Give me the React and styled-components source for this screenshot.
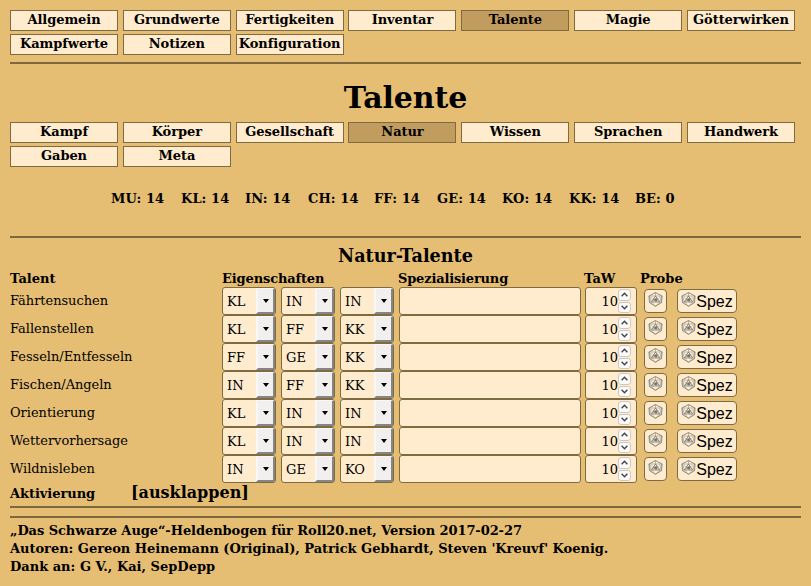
import React from "react";
import styled, { createGlobalStyle } from "styled-components";

const ink = "#000";
const line = "#806a40";
const cream = "#ffebcd";

const GlobalStyle = createGlobalStyle`
  *, *::before, *::after { box-sizing: border-box; }
  body {
    margin: 0;
    background: #e5be74;
    color: ${ink};
    font: 13px/18px "DejaVu Serif", serif;
    overflow: hidden;
  }
`;

const Sheet = styled.main`
  width: 811px;
  height: 586px;
  padding: 10px 10px 0;
`;

const Tabs = styled.nav`
  display: flex;
  flex-wrap: wrap;
  gap: 3px 4.83px;
`;

const Tab = styled.button`
  width: 108px;
  height: 21px;
  padding: 0 0 2px;
  border: 1px solid ${line};
  background: ${(p) => (p.$active ? "#c09c5e" : cream)};
  color: ${ink};
  font: bold 13px/17px "DejaVu Serif", serif;
  letter-spacing: -0.07px;
  white-space: nowrap;
  display: flex;
  justify-content: center;
  align-items: center;
`;

const Rule = styled.hr`
  height: 2px;
  margin: ${(p) => p.$top}px 0 0;
  border: 0;
  background: #80683e;
`;

const Title = styled.h1`
  margin: 15px 0 5px;
  font-size: 30px;
  line-height: 38px;
  letter-spacing: -0.1px;
  text-align: center;
`;

const Stats = styled.div`
  display: flex;
  margin: 23px 0 0 101px;
  font-weight: bold;
`;

const Stat = styled.span`
  width: ${(p) => p.$w}px;
  letter-spacing: 0.08px;
  white-space: nowrap;
`;

const Subtitle = styled.h2`
  margin: 6px 0 0;
  font-size: 17.6px;
  line-height: 24px;
  text-align: center;
`;

const Row = styled.div`
  display: grid;
  grid-template-columns: 212px 59px 59px 59px 186px 59px 33px 60px;
  height: 28px;
`;

const HeadRow = styled.div`
  display: grid;
  grid-template-columns: 212px 176px 186px 56px 60px;
  height: 19px;
  padding-top: 2px;
  line-height: 18px;
  font-weight: bold;
`;

const HeadCell = styled.span`
  letter-spacing: ${(p) => p.$tracking || 0}px;
`;

const Name = styled.span`
  line-height: 27px;
  letter-spacing: -0.04px;
`;

const Select = styled.div`
  display: flex;
  justify-content: space-between;
  width: 54px;
  height: 28px;
  padding-left: 4px;
  border: 1px solid ${line};
  border-radius: 3px;
  background: ${cream};
  line-height: 27px;
`;

const Arrow = styled.span`
  width: 19px;
  height: 26px;
  border-style: solid;
  border-width: 1px 2px 2px 2px;
  border-color: #f7f7f7 #858585 #858585 #f7f7f7;
  background: #f1f0ef;
  display: flex;
  align-items: center;
  justify-content: center;

  &::after {
    content: "";
    border: 3.5px solid transparent;
    border-top: 4px solid #000;
    border-bottom: 0;
  }
`;

const Field = styled.div`
  width: 182px;
  height: 28px;
  border: 1px solid ${line};
  border-radius: 3px;
  background: ${cream};
`;

const NumberField = styled.div`
  display: flex;
  justify-content: flex-end;
  width: 52px;
  height: 28px;
  padding: 0 5px 0 0;
  border: 1px solid ${line};
  border-radius: 3px;
  background: ${cream};
  line-height: 27px;
`;

const Spinner = styled.span`
  display: flex;
  flex-direction: column;
  gap: 1px;
  width: 13px;
  padding-top: 1px;
`;

const Step = styled.span`
  display: flex;
  align-items: center;
  justify-content: center;
  height: 11.5px;
  border: 1px solid #d0c8bc;
  border-radius: 3px;
  background: #fbfafa;
`;

const Roll = styled.button`
  display: flex;
  align-items: center;
  justify-content: center;
  width: ${(p) => (p.$wide ? 60 : 23)}px;
  height: 24px;
  margin-top: 2px;
  padding: 0;
  border: 1px solid ${line};
  border-radius: 4px;
  background: ${cream};
  color: ${ink};
  font: 16px/22px "Liberation Sans", sans-serif;
`;

const RollLabel = styled.span`
  padding-top: 2px;
`;

const DieIcon = styled.svg`
  flex: none;
  width: 15px;
  height: 16px;
  margin-top: -4px;
`;

const Activation = styled.div`
  display: flex;
  align-items: baseline;
  height: 23px;
  font-weight: bold;
  line-height: 20px;
`;

const ActivationLabel = styled.span`
  width: 121px;
  letter-spacing: -0.05px;
`;

const Expand = styled.span`
  font-size: 16px;
`;

const Credits = styled.footer`
  margin-top: 4px;
  font-weight: bold;
`;

const Credit = styled.div`
  height: 18px;
  letter-spacing: ${(p) => p.$tracking || 0}px;
  white-space: nowrap;
`;

const mainTabs = ["Allgemein", "Grundwerte", "Fertigkeiten", "Inventar", "Talente", "Magie", "Götterwirken", "Kampfwerte", "Notizen", "Konfiguration"];
const talentTabs = ["Kampf", "Körper", "Gesellschaft", "Natur", "Wissen", "Sprachen", "Handwerk", "Gaben", "Meta"];
const stats = [["MU: 14", 70], ["KL: 14", 64], ["IN: 14", 63], ["CH: 14", 66], ["FF: 14", 63], ["GE: 14", 65], ["KO: 14", 67], ["KK: 14", 66], ["BE: 0", 60]];
const talents = [
  ["Fährtensuchen", "KL", "IN", "IN"],
  ["Fallenstellen", "KL", "FF", "KK"],
  ["Fesseln/Entfesseln", "FF", "GE", "KK"],
  ["Fischen/Angeln", "IN", "FF", "KK"],
  ["Orientierung", "KL", "IN", "IN"],
  ["Wettervorhersage", "KL", "IN", "IN"],
  ["Wildnisleben", "IN", "GE", "KO"],
];

function Die() {
  return (
    <DieIcon viewBox="0 0 15 16" fill="none" strokeLinejoin="round">
      <path d="M7.5 1.6 14 5 13.5 11.6 7.5 15.3 1.5 11.6 1 5Z" fill="#fdf1dc" stroke="#77726a" strokeWidth=".8" />
      <path d="M7.5 5 11.6 11H3.4Z" stroke="#5f594f" strokeWidth=".7" />
      <path d="M7.5 1v4M1 5h13l-2.4 6 1.9.6M1 5l2.4 6-1.9.6M3.4 11l4.1 4.3L11.6 11" stroke="#8a8275" strokeWidth=".55" />
      <path d="M1.9 6v5M13.1 6v5" stroke="#6fb2d6" strokeWidth=".8" />
      <path d="M3 5.6 4.8 8.4M12 5.6 10.2 8.4" stroke="#d99a5c" strokeWidth=".6" />
      <path d="M6.1 7.7v2.3M7.3 7.8h1.5v2.1H7.3z" stroke="#463f38" strokeWidth=".8" />
    </DieIcon>
  );
}

function Chevron({ down }) {
  return (
    <svg width="7" height="5" viewBox="0 0 7 5" fill="none" stroke="#444" strokeWidth="1.4">
      <path d={down ? "M.6 .8 3.5 3.7 6.4 .8" : "M.6 4.2 3.5 1.3 6.4 4.2"} />
    </svg>
  );
}

function TabBar({ items, active }) {
  return (
    <Tabs>
      {items.map((label) => (
        <Tab key={label} $active={label === active}>{label}</Tab>
      ))}
    </Tabs>
  );
}

function TalentRow({ name, traits }) {
  return (
    <Row>
      <Name>{name}</Name>
      {traits.map((trait, i) => (
        <Select key={i}>{trait}<Arrow /></Select>
      ))}
      <Field />
      <NumberField>
        10
        <Spinner>
          <Step><Chevron /></Step>
          <Step><Chevron down /></Step>
        </Spinner>
      </NumberField>
      <Roll><Die /></Roll>
      <Roll $wide><Die /><RollLabel>Spez</RollLabel></Roll>
    </Row>
  );
}

export default function App() {
  return (
    <Sheet>
      <GlobalStyle />
      <TabBar items={mainTabs} active="Talente" />
      <Rule $top={7} />
      <Title>Talente</Title>
      <TabBar items={talentTabs} active="Natur" />
      <Stats>
        {stats.map(([label, w]) => <Stat key={label} $w={w}>{label}</Stat>)}
      </Stats>
      <Rule $top={28} />
      <Subtitle>Natur-Talente</Subtitle>
      <HeadRow>
        <HeadCell>Talent</HeadCell>
        <HeadCell $tracking={-0.14}>Eigenschaften</HeadCell>
        <HeadCell $tracking={-0.18}>Spezialisierung</HeadCell>
        <HeadCell>TaW</HeadCell>
        <HeadCell>Probe</HeadCell>
      </HeadRow>
      {talents.map(([name, ...traits]) => (
        <TalentRow key={name} name={name} traits={traits} />
      ))}
      <Activation>
        <ActivationLabel>Aktivierung</ActivationLabel>
        <Expand>[ausklappen]</Expand>
      </Activation>
      <Rule $top={0} />
      <Rule $top={8} />
      <Credits>
        <Credit $tracking={-0.075}>„Das Schwarze Auge“-Heldenbogen für Roll20.net, Version 2017-02-27</Credit>
        <Credit $tracking={-0.03}>Autoren: Gereon Heinemann (Original), Patrick Gebhardt, Steven 'Kreuvf' Koenig.</Credit>
        <Credit>Dank an: G V., Kai, SepDepp</Credit>
      </Credits>
    </Sheet>
  );
}
